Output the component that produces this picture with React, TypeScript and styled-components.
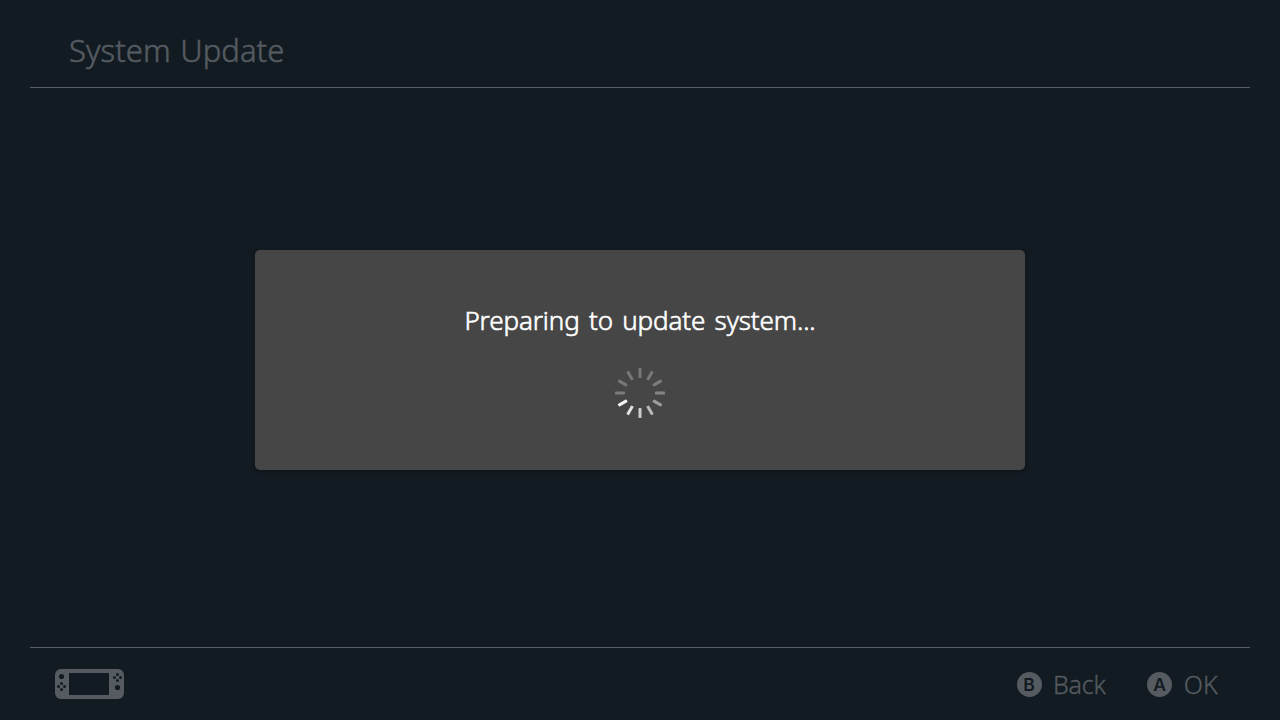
import React from "react";
import styled, { createGlobalStyle } from "styled-components";

const Global = createGlobalStyle`
  * { box-sizing: border-box; }
  body { margin: 0; background: #131b22; }
`;

const Screen = styled.div`
  width: 1280px;
  height: 720px;
  padding: 0 30px;
  display: flex;
  flex-direction: column;
  background: #131b22;
  color: #555b61;
  font-family: "Noto Sans", "Open Sans", sans-serif;
  overflow: hidden;
`;

const Header = styled.header`
  height: 88px;
  padding: 30px 0 0 39px;
  border-bottom: 1px solid #595f65;
`;

const Title = styled.h1`
  margin: 0;
  font-size: 31px;
  line-height: 41px;
  font-weight: 300;
  letter-spacing: 0.05px;
  word-spacing: 1.5px;
  -webkit-text-stroke: 0.5px currentColor;
  white-space: nowrap;
`;

const Main = styled.main`
  flex: 1;
  display: flex;
  justify-content: center;
  padding-top: 162px;
`;

const Dialog = styled.section`
  width: 770px;
  height: 220px;
  padding-top: 50px;
  display: flex;
  flex-direction: column;
  align-items: center;
  gap: 28px;
  border-radius: 5px;
  background: #464646;
  box-shadow: 0 2px 4px rgba(0, 0, 0, 0.25);
`;

const Message = styled.p`
  margin: 0;
  color: #fff;
  font-size: 26px;
  line-height: 40px;
  font-weight: 300;
  letter-spacing: -0.12px;
  word-spacing: 2.7px;
  -webkit-text-stroke: 0.6px currentColor;
  white-space: nowrap;
`;

const Footer = styled.footer`
  height: 73px;
  padding: 0 32px 0 25px;
  display: flex;
  align-items: center;
  justify-content: space-between;
  border-top: 1px solid #595f65;
`;

const Actions = styled.div`
  display: flex;
  gap: 41.5px;
`;

const Action = styled.div`
  display: flex;
  align-items: center;
  gap: 11.5px;
`;

const Badge = styled.span`
  width: 25px;
  height: 25px;
  border-radius: 50%;
  display: flex;
  align-items: center;
  justify-content: center;
  background: #555b61;
  color: #131b22;
  font-family: Inter, "Noto Sans", sans-serif;
  font-size: 17.5px;
  line-height: 25px;
  font-weight: 600;
`;

const Label = styled.span<{ $tracking: number }>`
  font-size: 25px;
  line-height: 34px;
  font-weight: 300;
  letter-spacing: ${(p) => p.$tracking}px;
  -webkit-text-stroke: 0.3px currentColor;
`;

const SPOKES = ["#777777", "#797979", "#7c7c7c", "#858585", "#9c9c9c", "#bababa", "#cdcdcd", "#e2e2e2", "#f4f4f4", "#7c7c7c", "#777777", "#777777"];

const Spinner = () => (
  <svg width="50" height="50" viewBox="-25 -25 50 50">
    {SPOKES.map((c, i) => (
      <rect key={i} x="-1.5" y="-25" width="3" height="10" rx="0.8" fill={c} transform={`rotate(${i * 30})`} />
    ))}
  </svg>
);

const Console = () => (
  <svg width="69" height="30" viewBox="0 0 69 30">
    <rect width="69" height="30" rx="6" fill="#555b61" />
    <g fill="#131b22">
      <rect x="14" y="4" width="40" height="22" />
      <circle cx="6.5" cy="7.5" r="2.6" />
      <circle cx="62.5" cy="18.5" r="2.6" />
      {[[6.5, 17.5], [62.5, 8.5]].map(([x, y]) => (
        <g key={x}>
          <circle cx={x} cy={y - 3} r="1.5" />
          <circle cx={x} cy={y + 3} r="1.5" />
          <circle cx={x - 3} cy={y} r="1.5" />
          <circle cx={x + 3} cy={y} r="1.5" />
        </g>
      ))}
    </g>
  </svg>
);

export default function App() {
  return (
    <Screen>
      <Global />
      <Header>
        <Title>System Update</Title>
      </Header>
      <Main>
        <Dialog>
          <Message>Preparing to update system...</Message>
          <Spinner />
        </Dialog>
      </Main>
      <Footer>
        <Console />
        <Actions>
          <Action>
            <Badge>B</Badge>
            <Label $tracking={-0.2}>Back</Label>
          </Action>
          <Action>
            <Badge>A</Badge>
            <Label $tracking={0.2}>OK</Label>
          </Action>
        </Actions>
      </Footer>
    </Screen>
  );
}
